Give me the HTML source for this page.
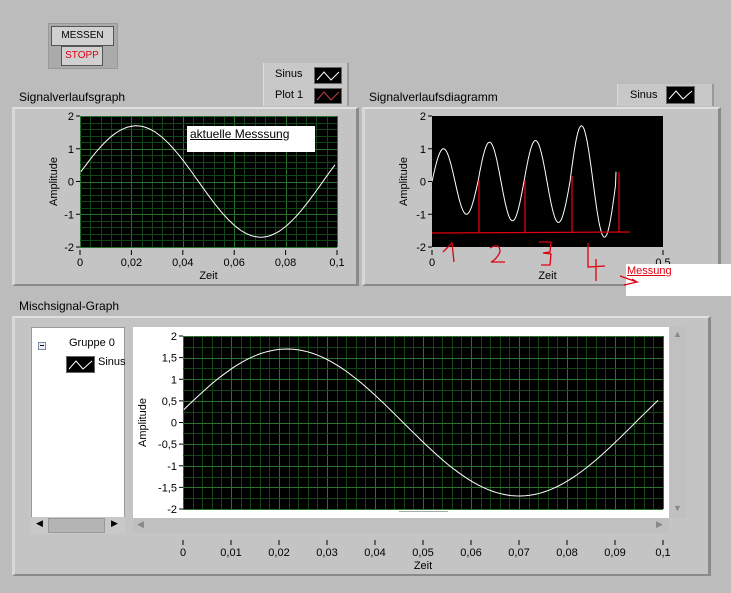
<!DOCTYPE html>
<html><head><meta charset="utf-8"><style>
body{margin:0;width:731px;height:593px;background:#bcbcbc;font-family:"Liberation Sans",sans-serif;font-size:11px;color:#000;position:relative;overflow:hidden}
.a{position:absolute}
.panel{position:absolute;background:#c4c4c4;border-top:2px solid #e0e0e0;border-left:3px solid #d8d8d8;border-right:3px solid #8a8a8a;border-bottom:2px solid #8a8a8a;box-sizing:border-box}
.btn{position:absolute;background:#d0d0d0;border:1px solid #555;box-sizing:border-box;text-align:center;font-size:10px;line-height:17px}
.sw{position:absolute;background:#000;border:1px solid #666;box-sizing:border-box}
.t{position:absolute;font-size:11px;white-space:nowrap}
</style></head><body>
<div class="a" style="left:48px;top:23px;width:70px;height:46px;background:#aaa;border:1px solid #999;box-sizing:border-box"></div>
<div class="btn" style="left:51px;top:26px;width:63px;height:20px">MESSEN</div>
<div class="btn" style="left:61px;top:46px;width:42px;height:20px;color:#e00010">STOPP</div>

<div class="a" style="left:263px;top:63px;width:83px;height:43px;background:#c8c8c8;border-left:1px solid #ddd;border-right:2px solid #999"></div>
<div class="t" style="left:275px;top:68px">Sinus</div>
<div class="t" style="left:275px;top:89px">Plot 1</div>
<div class="sw" style="left:314px;top:67px;width:28px;height:17px"><svg width="26" height="15"><polyline points="2,12 9,4 16,12 24,4" fill="none" stroke="#fff" stroke-width="1"/></svg></div>
<div class="sw" style="left:314px;top:88px;width:28px;height:16px"><svg width="26" height="14"><polyline points="2,11 9,3 16,11 24,3" fill="none" stroke="#c04040" stroke-width="1"/></svg></div>

<div class="t" style="left:19px;top:90px;font-size:12px">Signalverlaufsgraph</div>
<div class="panel" style="left:12px;top:107px;width:347px;height:179px"></div>

<div class="t" style="left:369px;top:90px;font-size:12px">Signalverlaufsdiagramm</div>
<div class="a" style="left:617px;top:84px;width:94px;height:22px;background:#c8c8c8;border-left:1px solid #ddd;border-right:2px solid #999"></div>
<div class="t" style="left:630px;top:89px">Sinus</div>
<div class="sw" style="left:666px;top:86px;width:29px;height:18px"><svg width="27" height="16"><polyline points="2,12 9,4 16,12 25,4" fill="none" stroke="#fff"/></svg></div>
<div class="panel" style="left:362px;top:107px;width:359px;height:179px"></div>

<div class="t" style="left:19px;top:299px;font-size:12px">Mischsignal-Graph</div>
<div class="panel" style="left:12px;top:316px;width:699px;height:260px"></div>
<div class="a" style="left:31px;top:327px;width:94px;height:191px;background:#fff;border:1px solid #999;box-sizing:border-box"></div>
<div class="a" style="left:31px;top:517px;width:94px;height:17px;background:#c8c8c8"></div>
<div class="a" style="left:48px;top:518px;width:57px;height:15px;background:#b4b4b4;border:1px solid #999;box-sizing:border-box"></div>
<div class="t" style="left:36px;top:518px;font-size:9px">◀</div>
<div class="t" style="left:111px;top:518px;font-size:9px">▶</div>
<div class="a" style="left:38px;top:342px;width:8px;height:8px;border:1px solid #7a8aa0;background:#eef;box-sizing:border-box"></div>
<div class="a" style="left:40px;top:345px;width:4px;height:1px;background:#000"></div>
<div class="t" style="left:69px;top:337px">Gruppe 0</div>
<div class="t" style="left:98px;top:356px">Sinus</div>
<div class="sw" style="left:66px;top:356px;width:29px;height:17px"><svg width="27" height="15"><polyline points="2,12 9,4 16,12 25,4" fill="none" stroke="#fff"/></svg></div>
<div class="a" style="left:133px;top:327px;width:536px;height:191px;background:#fff"></div>
<div class="a" style="left:133px;top:518px;width:536px;height:15px;background:#c0c0c0"></div>
<div class="t" style="left:137px;top:519px;font-size:9px;color:#888">◀</div>
<div class="t" style="left:656px;top:519px;font-size:9px;color:#888">▶</div>
<div class="a" style="left:670px;top:327px;width:17px;height:191px;background:#c0c0c0"></div>
<div class="t" style="left:673px;top:329px;font-size:9px;color:#888">▲</div>
<div class="t" style="left:673px;top:503px;font-size:9px;color:#888">▼</div>

<svg class="a" style="left:0;top:0" width="731" height="593" id="s1"></svg>
<div class="a" style="left:399px;top:511px;width:49px;height:1px;background:#aaa"></div>
<div class="a" style="left:187px;top:126px;width:128px;height:26px;background:#fff"></div>
<div class="t" style="left:190px;top:127px;font-size:12px;text-decoration:underline">aktuelle Messsung</div>
<div class="a" style="left:626px;top:264px;width:105px;height:32px;background:#fff"></div>
<div class="t" style="left:627px;top:265px;color:#e00010;text-decoration:underline">Messung</div>
<svg class="a" style="left:0;top:0" width="731" height="593" id="s2"></svg>
<script>
function sv(id,h){document.getElementById(id).innerHTML+=h;}
function grid(x0,y0,x1,y1,nx,ny,mx,my){let h=`<rect x="${x0}" y="${y0}" width="${x1-x0}" height="${y1-y0}" fill="#000"/>`;
 for(let i=0;i<=nx*mx;i++){let x=Math.round(x0+(x1-x0)*i/(nx*mx))+0.5;h+=`<line x1="${x}" y1="${y0}" x2="${x}" y2="${y1}" stroke="${i%mx?'#134616':'#2a722e'}" stroke-width="1"/>`;}
 for(let i=0;i<=ny*my;i++){let y=Math.round(y0+(y1-y0)*i/(ny*my))+0.5;h+=`<line x1="${x0}" y1="${y}" x2="${x1}" y2="${y}" stroke="${i%my?'#134616':'#2a722e'}" stroke-width="1"/>`;}return h;}
function sine(x0,y0,x1,y1,ymax,ymin){let p=[];for(let i=0;i<=100;i++){let t=0.1*i/100;let v=1.7*Math.sin(2*Math.PI*t/0.098+0.177);p.push((x0+(x1-x0)*i/100).toFixed(1)+","+(y0+(ymax-v)/(ymax-ymin)*(y1-y0)).toFixed(1));}return `<polyline points="${p.join(' ')}" fill="none" stroke="#fff" stroke-width="1"/>`;}
function axes(x0,y0,x1,y1,yl,xl,ylab,xlab,xo){xo=xo||0;let h='';yl.forEach((l,i)=>{let y=y0+(y1-y0)*i/(yl.length-1);h+=`<line x1="${x0-4}" y1="${y}" x2="${x0}" y2="${y}" stroke="#000"/><text x="${x0-6}" y="${y+4}" text-anchor="end" font-size="11" font-family="Liberation Sans">${l}</text>`;});
 let yb=y1+xo;
 xl.forEach((l,i)=>{if(l==='')return;let x=x0+(x1-x0)*i/(xl.length-1);h+=`<line x1="${x}" y1="${yb+3}" x2="${x}" y2="${yb+8}" stroke="#000"/><text x="${x}" y="${yb+19}" text-anchor="middle" font-size="11" font-family="Liberation Sans">${l}</text>`;});
 h+=`<text x="${(x0+x1)/2}" y="${yb+32}" text-anchor="middle" font-size="11" font-family="Liberation Sans">${xlab}</text>`;
 h+=`<text transform="translate(${ylab},${(y0+y1)/2}) rotate(-90)" text-anchor="middle" font-size="11" font-family="Liberation Sans">Amplitude</text>`;return h;}
sv('s1',grid(80,116,337,247,5,4,5,5)+sine(81,116,335,247,2,-2)+axes(80,116,337,247,['2','1','0','-1','-2'],['0','0,02','0,04','0,06','0,08','0,1'],57,'Zeit'));
let h=`<rect x="432" y="116" width="231" height="131" fill="#000"/>`;
let p=[];const amps=[1,1.2,1.25,1.7];for(let i=0;i<=400;i++){let x=432+184*i/400;let ph=(x-432)/46;let k=Math.min(3,Math.floor(ph));let v=amps[k]*Math.sin(2*Math.PI*ph);if(i==400)v=0.3;p.push(x.toFixed(1)+","+(181.5-v*32.75).toFixed(1));}
h+=`<polyline points="${p.join(' ')}" fill="none" stroke="#fff"/>`;
h+=axes(432,116,663,247,['2','1','0','-1','-2'],['0','','','','','0.5'],407,'Zeit');
sv('s1',h);
sv('s1',grid(183,336,663,509,10,8,5,2)+sine(184,336,658,509,2,-2)+axes(183,336,663,509,['2','1,5','1','0,5','0','-0,5','-1','-1,5','-2'],['0','0,01','0,02','0,03','0,04','0,05','0,06','0,07','0,08','0,09','0,1'],146,'Zeit',28));
sv('s2',`<g stroke="#e00010" stroke-width="1.3" fill="none"><line x1="432" y1="233" x2="630" y2="232"/><line x1="479" y1="180" x2="479" y2="233"/><line x1="525" y1="180" x2="525" y2="233"/><line x1="572" y1="176" x2="572" y2="232"/><line x1="619" y1="172" x2="619" y2="232"/>
<path d="M443,252 L452,243 L454,262"/><path d="M490,248 Q500,242 500,252 Q496,260 491,262 L505,262"/><path d="M539,242 L551,242 L550,252 L543,253 L551,254 L550,265 L541,265"/><path d="M588,243 L588,267 L605,266 M596,259 L596,281"/><path d="M620,276 L637,282 L624,285 M637,282 L632,279"/></g>`);
</script>
</body></html>
